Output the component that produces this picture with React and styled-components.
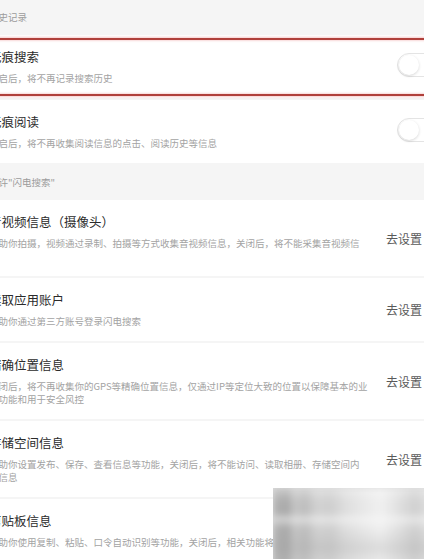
import React from 'react';
import styled, { createGlobalStyle } from 'styled-components';

const GlobalStyle = createGlobalStyle`
  html, body {
    margin: 0;
    padding: 0;
    background: #ffffff;
    overflow: hidden;
  }
  body {
    font-family: "Noto Sans CJK SC", "Noto Sans", sans-serif;
  }
`;

const Viewport = styled.div`
  width: 424px;
  height: 559px;
  overflow: hidden;
  position: relative;
`;

const Page = styled.div`
  width: 460px;
  margin-left: -11px;
  background: #ffffff;
`;

const SectionHeader = styled.div`
  height: 35px;
  display: flex;
  align-items: center;
  background: #f5f5f5;
  color: #9c9c9c;
  font-size: 9.5px;
  line-height: 13px;
  white-space: nowrap;
`;

const Row = styled.div`
  position: relative;
  display: flex;
  align-items: center;
  justify-content: space-between;
  padding: 13px 12px 13px 0;
  border-bottom: 2px solid #f5f5f5;
  background: #ffffff;
`;

const TextBlock = styled.div`
  display: flex;
  flex-direction: column;
  gap: 6px;
  min-width: 0;
`;

const Title = styled.div`
  font-size: 12.5px;
  line-height: 18px;
  color: #2b2b2b;
  white-space: nowrap;
`;

const Desc = styled.div`
  font-size: 9.5px;
  line-height: 13px;
  color: #a3a3a3;
  white-space: nowrap;
`;

const Switch = styled.div`
  flex: none;
  width: 40px;
  height: 24px;
  margin-top: -3px;
  box-sizing: border-box;
  border-radius: 12px;
  border: 1px solid #e4e4e4;
  background: #ffffff;
  display: flex;
  align-items: center;
  padding: 0 1px;
`;

const Knob = styled.div`
  width: 20px;
  height: 20px;
  border-radius: 50%;
  background: #ffffff;
  box-shadow: 0 1px 3px rgba(0, 0, 0, 0.16);
`;

const GoLink = styled.div`
  flex: none;
  display: flex;
  align-items: center;
  gap: 1px;
  font-size: 12px;
  color: #5a5a5a;
  white-space: nowrap;
`;

const Highlight = styled.div`
  position: absolute;
  left: 0;
  right: 0;
  top: 3px;
  height: 58px;
  box-sizing: border-box;
  border-top: 2px solid #b0403b;
  border-bottom: 2px solid #b0403b;
  box-shadow: 0 0 2px 1px rgba(235, 140, 140, 0.45), inset 0 0 2px 1px rgba(235, 140, 140, 0.35);
  pointer-events: none;
`;

const Mosaic = styled.div`
  position: absolute;
  left: 273px;
  top: 488px;
  width: 160px;
  height: 80px;
  overflow: hidden;
  background: #dcdcdc;
`;

const MosaicBlur = styled.div`
  width: 100%;
  height: 100%;
  filter: blur(3px);
  background:
    linear-gradient(180deg, rgba(255, 255, 255, 0.35) 0px, rgba(255, 255, 255, 0) 14px, rgba(255, 255, 255, 0) 26px, rgba(250, 250, 250, 0.55) 30px, rgba(255, 255, 255, 0) 40px, rgba(160, 160, 160, 0.25) 60px, rgba(255, 255, 255, 0.1) 80px),
    linear-gradient(90deg, #b4b4b4 0px, #a9a9a9 14px, #c6c6c6 22px, #bdbdbd 32px, #d2d2d2 44px, #cfcfcf 58px, #dedede 72px, #e9e9e9 92px, #f0f0f0 108px, #e2e2e2 124px, #d0d0d0 142px, #e4e4e4 160px);
`;

const Chevron = () => (
  <svg width="14" height="14" viewBox="0 0 14 14">
    <path d="M5 3 L9 7 L5 11" fill="none" stroke="#9a9a9a" strokeWidth="1.3" />
  </svg>
);

const toggles = [
  { title: '无痕搜索', desc: ['开启后，将不再记录搜索历史'], marked: true },
  { title: '无痕阅读', desc: ['开启后，将不再收集阅读信息的点击、阅读历史等信息'] },
];

const permissions = [
  {
    title: '音视频信息（摄像头）',
    desc: ['帮助你拍摄，视频通过录制、拍摄等方式收集音视频信息，关闭后，将不能采集音视频信', '息'],
  },
  { title: '读取应用账户', desc: ['帮助你通过第三方账号登录闪电搜索'] },
  {
    title: '精确位置信息',
    desc: ['关闭后，将不再收集你的GPS等精确位置信息，仅通过IP等定位大致的位置以保障基本的业', '务功能和用于安全风控'],
  },
  {
    title: '存储空间信息',
    desc: ['帮助你设置发布、保存、查看信息等功能，关闭后，将不能访问、读取相册、存储空间内', '的信息'],
  },
  { title: '剪贴板信息', desc: ['帮助你使用复制、粘贴、口令自动识别等功能，关闭后，相关功能将无法使用'] },
];

const Item = ({ title, desc, children, marked }) => (
  <Row>
    <TextBlock>
      <Title>{title}</Title>
      <div>
        {desc.map((line) => <Desc key={line}>{line}</Desc>)}
      </div>
    </TextBlock>
    {children}
    {marked && <Highlight />}
  </Row>
);

const App = () => (
  <Viewport>
    <GlobalStyle />
    <Page>
      <SectionHeader>历史记录</SectionHeader>
      {toggles.map((t) => (
        <Item key={t.title} title={t.title} desc={t.desc} marked={t.marked}>
          <Switch><Knob /></Switch>
        </Item>
      ))}
      <SectionHeader>允许"闪电搜索"</SectionHeader>
      {permissions.map((p) => (
        <Item key={p.title} title={p.title} desc={p.desc}>
          <GoLink>去设置<Chevron /></GoLink>
        </Item>
      ))}
    </Page>
    <Mosaic><MosaicBlur /></Mosaic>
  </Viewport>
);

export default App;
